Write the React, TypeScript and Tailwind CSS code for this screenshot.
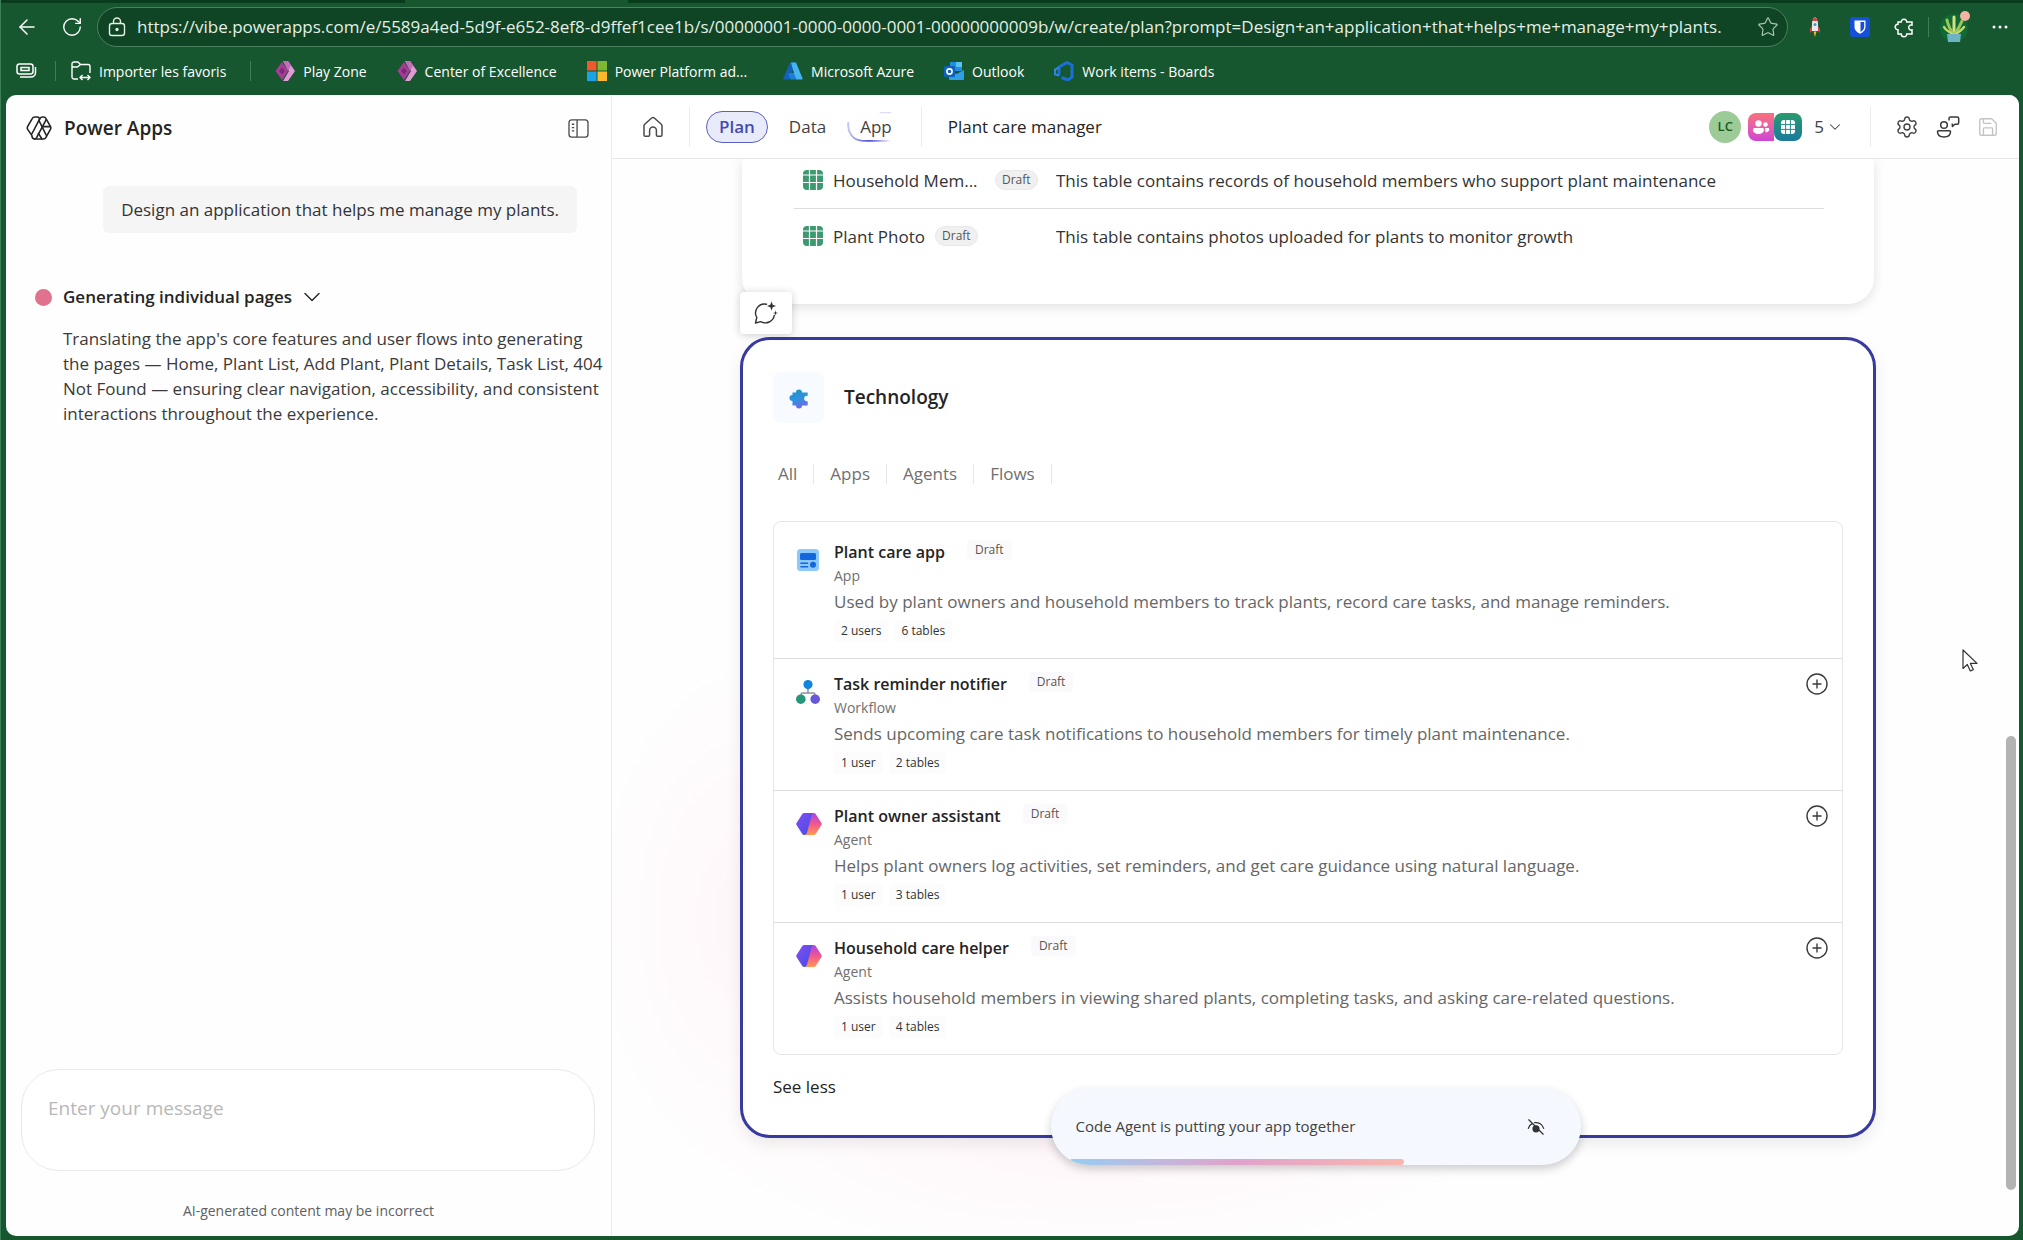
import { ReactNode } from "react";
import { ArrowLeft, ChevronDown, CirclePlus, RotateCw, Save, Settings, Star } from "lucide-react";

type Item = {
  title: string;
  kind: "App" | "Workflow" | "Agent";
  description: string;
  users: string;
  tables: string;
};

const TABLES = [
  { name: "Household Mem...", description: "This table contains records of household members who support plant maintenance", cut: true },
  { name: "Plant Photo", description: "This table contains photos uploaded for plants to monitor growth", cut: false },
];

const ITEMS: Item[] = [
  {
    title: "Plant care app",
    kind: "App",
    description: "Used by plant owners and household members to track plants, record care tasks, and manage reminders.",
    users: "2 users",
    tables: "6 tables",
  },
  {
    title: "Task reminder notifier",
    kind: "Workflow",
    description: "Sends upcoming care task notifications to household members for timely plant maintenance.",
    users: "1 user",
    tables: "2 tables",
  },
  {
    title: "Plant owner assistant",
    kind: "Agent",
    description: "Helps plant owners log activities, set reminders, and get care guidance using natural language.",
    users: "1 user",
    tables: "3 tables",
  },
  {
    title: "Household care helper",
    kind: "Agent",
    description: "Assists household members in viewing shared plants, completing tasks, and asking care-related questions.",
    users: "1 user",
    tables: "4 tables",
  },
];

const PUZZLE =
  "M6 7h3.2a2.8 2.8 0 1 1 5.6 0H20v3a2.6 2.6 0 1 0 0 5v4h-5.2a2.8 2.8 0 1 1-5.6 0H6v-4.2a2.8 2.8 0 1 1 0-5.6z";

function PowerAppsLogo() {
  return (
    <svg className="w-[26px] h-6" viewBox="0 0 26 24" fill="none" stroke="#242424" strokeWidth="1.6" strokeLinejoin="round" strokeLinecap="round" aria-hidden="true">
      <path d="M5.8 19.4 1.7 13.4a3 3 0 0 1 0-3L6.2 2.6A3 3 0 0 1 8.8 1h2.6a2 2 0 0 1 1.8 2.9L5.8 18" />
      <path d="M13 4.6 14 2.4A3 3 0 0 1 16.6 1h.8a3 3 0 0 1 2.6 1.6l4.4 7.8a3 3 0 0 1 0 3L20 21.4A3 3 0 0 1 17.4 23H9a3 3 0 0 1-3-2.6" />
      <path d="M20.2 3.6 10.6 21.6A3 3 0 0 1 8.4 23" />
      <path d="m13.2 5 7 14.2M12.4 17.4l3.4 5.4M16 10.6h8" />
    </svg>
  );
}

function PaneIcon() {
  return (
    <svg className="w-[21px] h-[19px]" viewBox="0 0 22 20" fill="none" stroke="#4a4a4a" strokeWidth="1.4" aria-hidden="true">
      <rect x="1" y="1" width="20" height="18" rx="3" />
      <path d="M9.5 1v18M4 5.5h2.5M4 9h2.5M4 12.5h2.5" />
    </svg>
  );
}

function HomeIcon() {
  return (
    <svg className="size-6" viewBox="0 0 24 24" fill="none" stroke="#4a4a4a" strokeWidth="1.5" strokeLinejoin="round" aria-hidden="true">
      <path d="M3 10.800c0-.6.2-1.100.7-1.500l7-6.300a2 2 0 0 1 2.600 0l7 6.300c.5.4.7.9.7 1.500V20a1.300 1.300 0 0 1-1.300 1.300h-3A1.300 1.300 0 0 1 15.400 20v-4.600a3.400 3.400 0 0 0-6.800 0V20a1.300 1.300 0 0 1-1.300 1.300h-3A1.300 1.300 0 0 1 3 20z" />
    </svg>
  );
}

function FeedbackIcon() {
  return (
    <svg className="size-6" viewBox="0 0 24 24" fill="none" stroke="#3a3a3a" strokeWidth="1.5" strokeLinejoin="round" aria-hidden="true">
      <circle cx="8" cy="10" r="3.3" />
      <path d="M2.500 15.800h11a1 1 0 0 1 1 1c0 3.400-2.800 5.200-6.500 5.200s-6.500-1.800-6.500-5.200a1 1 0 0 1 1-1z" />
      <path d="M13 5.500v-2A1.500 1.500 0 0 1 14.500 2h6.700A1.500 1.500 0 0 1 22.700 3.500v4.200a1.500 1.500 0 0 1-1.500 1.500H19l-2.600 2.200V9.200h-.9" />
    </svg>
  );
}

function TableIcon() {
  return (
    <svg className="size-5 shrink-0" viewBox="0 0 20 20" aria-hidden="true">
      <rect width="20" height="20" rx="4" fill="#3d9970" />
      <path d="M6.5 0v20M13.5 0v20M0 5h20M0 12.5h20" stroke="#fff" strokeWidth="1.2" />
    </svg>
  );
}

function ItemIcon({ kind, id }: { kind: Item["kind"]; id: string }) {
  if (kind === "App") {
    return (
      <svg className="size-6" viewBox="0 0 24 24" aria-hidden="true">
        <rect x="1" y="1" width="22" height="22" rx="3.5" fill="#8cc8fa" />
        <rect x="4" y="5" width="16" height="7" rx="1.5" fill="#1267dd" />
        <path d="M5 15.2h6.5M5 18.8h6.5" stroke="#1267dd" strokeWidth="1.6" strokeLinecap="round" />
        <circle cx="17" cy="16.8" r="3" fill="#1267dd" />
      </svg>
    );
  }
  if (kind === "Workflow") {
    return (
      <svg className="size-6" viewBox="0 0 24 24" aria-hidden="true">
        <path d="M12 7v6M5 18v-3.5A1.5 1.5 0 0 1 6.5 13h11a1.5 1.5 0 0 1 1.5 1.5V18" fill="none" stroke="#8a9299" strokeWidth="1.5" />
        <circle cx="12" cy="4.6" r="4.6" fill="#1184dc" />
        <circle cx="4.8" cy="19.2" r="4.8" fill="#27977c" />
        <circle cx="19.2" cy="19.2" r="4.8" fill="#6658d8" />
      </svg>
    );
  }
  return (
    <svg className="w-[26px] h-6" viewBox="0 0 24 24" preserveAspectRatio="none" aria-hidden="true">
      <defs>
        <linearGradient id={`${id}-l`} x1="0" y1="0" x2="1" y2="1">
          <stop offset="0" stopColor="#8a4bf0" />
          <stop offset="1" stopColor="#3c50e8" />
        </linearGradient>
        <linearGradient id={`${id}-r`} x1="0" y1="0" x2="0" y2="1">
          <stop offset="0.1" stopColor="#b44ad8" />
          <stop offset="0.5" stopColor="#f3568c" />
          <stop offset="1" stopColor="#ff9a52" />
        </linearGradient>
      </defs>
      <path d="M7.500 1h9a2 2 0 0 1 1.700 1l5.300 9a2 2 0 0 1 0 2l-5.300 9a2 2 0 0 1-1.700 1H8z" fill={`url(#${id}-r)`} />
      <path d="M15 1H7.500a2 2 0 0 0-1.700 1L.5 11a2 2 0 0 0 0 2l5.300 9a2 2 0 0 0 1.700 1c1.500 0 2.300-1 2.700-2.500z" fill={`url(#${id}-l)`} />
    </svg>
  );
}

function DiamondIcon() {
  return (
    <svg className="size-5 shrink-0" viewBox="0 0 20 20" aria-hidden="true">
      <path d="M8 0h5l7 10-7 10H8l6-10z" fill="#e29ad6" />
      <path d="M7 1l6 9-6 9-6.500-9z" fill="#a43c98" />
      <path d="M8 0h5l3 4.500L13 10z" fill="#c96bbd" />
      <path d="M7 6.500 10 10l-3 3.500L4 10z" fill="#7c2a78" />
    </svg>
  );
}

function Bookmark({ icon, label }: { icon: ReactNode; label: string }) {
  return (
    <a href="#" className="flex items-center gap-2 text-white">
      {icon}
      {label}
    </a>
  );
}

function BrowserBar() {
  return (
    <header className="text-white">
      <div className="flex h-[3px]">
        <div className="w-1/5 bg-[#093b1d]" />
        <div className="w-[11%]" />
        <div className="flex-1 bg-[#093b1d]" />
      </div>
      <div className="flex items-center h-10 mt-1 pl-[14px] pr-3">
        <button aria-label="Back"><ArrowLeft className="size-6" strokeWidth={1.5} /></button>
        <button aria-label="Refresh" className="ml-[22px]"><RotateCw className="size-[22px]" strokeWidth={1.5} /></button>
        <div className="ml-[14px] flex-1 min-w-0 h-10 flex items-center rounded-full border border-[#4c8160] bg-[#0f4425] pl-[9px] pr-2">
          <svg className="size-5 shrink-0" viewBox="0 0 20 20" fill="none" stroke="#e4efe6" strokeWidth="1.4" aria-hidden="true">
            <rect x="2.5" y="6.5" width="15" height="12" rx="2.5" />
            <path d="M6.500 6.500V4.500a3.500 3.500 0 0 1 7 0v2" />
            <circle cx="10" cy="12.500" r="1" fill="#e4efe6" />
          </svg>
          <input
            aria-label="Address"
            readOnly
            className="ml-[10px] flex-1 min-w-0 bg-transparent text-[17px] text-[#e4efe6] outline-none"
            value="https://vibe.powerapps.com/e/5589a4ed-5d9f-e652-8ef8-d9ffef1cee1b/s/00000001-0000-0000-0001-00000000009b/w/create/plan?prompt=Design+an+application+that+helps+me+manage+my+plants."
          />
          <button aria-label="Add to favorites" className="ml-2 text-[#a9c6b1]"><Star className="size-[22px]" strokeWidth={1.3} /></button>
        </div>
        <button aria-label="Rocket" className="ml-[22px]">
          <svg className="w-2.5 h-5" viewBox="0 0 10 20">
            <path d="M5 0c2 1.500 3 4 3 7v7H2V7c0-3 1-5.500 3-7z" fill="#e8e8ea" />
            <path d="M5 0c1.200 1 2.200 2.300 2.600 4H2.400C2.800 2.300 3.800 1 5 0zM2 9 0 12v4l2-2zM8 9l2 3v4l-2-2z" fill="#d8404a" />
            <circle cx="5" cy="7.500" r="1.500" fill="#4a90c8" />
            <path d="M3.500 14.500h3L5 20z" fill="#f7b52c" />
          </svg>
        </button>
        <button aria-label="Bitwarden" className="ml-[30px]">
          <svg className="size-5" viewBox="0 0 20 20">
            <rect width="20" height="20" rx="3" fill="#1450d8" />
            <path d="M4.500 3.500h11V10c0 3.500-3 5.500-5.500 6.800C7.500 15.500 4.500 13.500 4.500 10z" fill="#fff" />
            <path d="M10.500 5h3.700v5c0 2.300-1.900 3.900-3.700 4.900z" fill="#1450d8" />
          </svg>
        </button>
        <button aria-label="Extensions" className="ml-[22px]">
          <svg className="size-6" viewBox="0 0 24 24" fill="none" stroke="#fff" strokeWidth="1.5"><path d={PUZZLE} /></svg>
        </button>
        <span className="ml-3 w-px h-5 bg-[#3f7f57]" />
        <button aria-label="Profile" className="ml-[10px]">
          <svg className="size-8" viewBox="0 0 32 32">
            <circle cx="15" cy="17" r="14" fill="#0f6a35" />
            <g fill="none" strokeLinecap="round">
              <path d="M15 24V6" stroke="#d6e07c" strokeWidth="3" />
              <path d="M15 24C12 20 9 14 8 9M15 24c3-4 6-9 8-14" stroke="#9cc65a" strokeWidth="3" />
              <path d="M15 24C10 21 6 18 5 16M15 24c5-3 8-5 10-8" stroke="#c4d76c" strokeWidth="2.5" />
            </g>
            <path d="M8 23h14l-1 8H9z" fill="#6db3c4" />
            <circle cx="26" cy="5" r="5" fill="#f5b3a4" />
          </svg>
        </button>
        <button aria-label="More" className="ml-5">
          <svg className="w-5 h-1" viewBox="0 0 20 4" fill="#fff"><circle cx="3" cy="2" r="1.5" /><circle cx="9" cy="2" r="1.5" /><circle cx="15" cy="2" r="1.5" /></svg>
        </button>
      </div>
      <nav className="flex items-center h-12 px-[15px] text-[14px]" aria-label="Favorites">
        <button aria-label="Collections">
          <svg className="w-[21px] h-4" viewBox="0 0 21 16" fill="none" stroke="#fff" strokeWidth="1.5">
            <rect x="1" y="1" width="16" height="10" rx="2.5" />
            <path d="M5 4.500h8v3H5zM19.500 4v5.500a4.500 4.500 0 0 1-4.500 4.500H4" />
          </svg>
        </button>
        <span className="ml-[18px] mr-[15px] w-px h-5 bg-[#3f7f57]" />
        <Bookmark
          label="Importer les favoris"
          icon={
            <svg className="size-5" viewBox="0 0 20 20" fill="none" stroke="#fff" strokeWidth="1.4" strokeLinejoin="round">
              <path d="M7 18H3a2 2 0 0 1-2-2V3a2 2 0 0 1 2-2h4l2.500 2.500H17a2 2 0 0 1 2 2V12M1 6h5.500l3-2.500M9 16.500h10M11.500 14 9 16.500l2.500 2.500M16.500 14l2.500 2.500-2.500 2.500" />
            </svg>
          }
        />
        <span className="ml-6 mr-6 w-px h-5 bg-[#3f7f57]" />
        <div className="flex items-center gap-[30px]">
          <Bookmark label="Play Zone" icon={<DiamondIcon />} />
          <Bookmark label="Center of Excellence" icon={<DiamondIcon />} />
          <Bookmark
            label="Power Platform ad..."
            icon={
              <svg className="size-5" viewBox="0 0 20 20">
                <path d="M0 0h9.500v9.500H0z" fill="#f1582b" />
                <path d="M10.500 0H20v9.500h-9.500z" fill="#7cb832" />
                <path d="M0 10.500h9.500V20H0z" fill="#1ba3e8" />
                <path d="M10.500 10.500H20V20h-9.500z" fill="#fbb928" />
              </svg>
            }
          />
          <div className="ml-1.5">
            <Bookmark
              label="Microsoft Azure"
              icon={
                <svg className="size-5" viewBox="0 0 20 20">
                  <path d="M7 1.500h5L6.500 18.500H1.500c-1 0-1.500-.8-1.200-1.600z" fill="#1260b8" />
                  <path d="M8 1.500h5l6.500 15.700c.3.700-.2 1.300-1 1.300h-5L7 12.500h4z" fill="#45b4f0" />
                  <path d="M5 12.500h6l2.500 6H7.500z" fill="#1b7fd6" />
                </svg>
              }
            />
          </div>
          <Bookmark
            label="Outlook"
            icon={
              <svg className="size-5" viewBox="0 0 20 20">
                <path d="M6 1h12v9H6z" fill="#1f8fe0" />
                <path d="M12 1h6v5h-6z" fill="#59c2f5" />
                <path d="M5 9l7.500 4L20 9v9a1 1 0 0 1-1 1H6a1 1 0 0 1-1-1z" fill="#2f9fe8" />
                <rect y="5" width="11" height="11" rx="1" fill="#0f62b8" />
                <circle cx="5.5" cy="10.5" r="2.6" fill="none" stroke="#fff" strokeWidth="1.6" />
              </svg>
            }
          />
          <Bookmark
            label="Work items - Boards"
            icon={
              <svg className="size-5" viewBox="0 0 20 20" fill="none">
                <path d="M5 14.500V6l8-4.500L18 4v12l-4 3-6.500-2.500" stroke="#1b6fd8" strokeWidth="3" strokeLinejoin="round" />
                <path d="M5 6.500 1 8.500v5l4 1" stroke="#2f86e6" strokeWidth="2" />
              </svg>
            }
          />
        </div>
      </nav>
    </header>
  );
}

function Sidebar() {
  return (
    <aside className="w-[606px] shrink-0 flex flex-col border-r border-[#ececec]">
      <div className="h-[66px] flex items-center gap-3 pl-5 pr-[22px]">
        <PowerAppsLogo />
        <h1 className="flex-1 text-[19px] font-semibold text-[#242424]">Power Apps</h1>
        <button aria-label="Collapse pane"><PaneIcon /></button>
      </div>
      <p className="self-end mt-[25px] mr-[34px] px-[18px] py-[11px] rounded-md bg-[#f5f5f5] text-[17px] leading-[25px] text-[#333]">
        Design an application that helps me manage my plants.
      </p>
      <button className="mt-[51px] ml-[29px] h-[26px] self-start flex items-center text-[17px] font-semibold text-[#242424]">
        <span className="size-[17px] rounded-full bg-[#e0718f] mr-[11px]" />
        Generating individual pages
        <ChevronDown className="ml-1.5 size-7" strokeWidth={1.2} aria-hidden="true" />
      </button>
      <p className="mt-4 pl-[57px] pr-1 text-[17px] leading-[25px] text-[#3a3a3a]">
        Translating the app's core features and user flows into generating the pages — Home, Plant List, Add Plant, Plant Details, Task List, 404 Not Found — ensuring clear navigation, accessibility, and consistent interactions throughout the experience.
      </p>
      <div className="mt-auto ml-[15px] mr-4">
        <textarea
          aria-label="Message"
          placeholder="Enter your message"
          className="block w-full h-[102px] resize-none rounded-[38px] border border-[#e8e8e8] bg-white px-[26px] py-[25px] text-[19px] leading-[26px] placeholder:text-[#b8b8b8] outline-none"
        />
      </div>
      <p className="mt-[30px] mb-[15px] text-center text-[14px] leading-5 text-[#606060]">AI-generated content may be incorrect</p>
    </aside>
  );
}

function Toolbar() {
  return (
    <div className="h-16 shrink-0 flex items-center border-b border-[#e6e6e6] bg-white pl-[29px] pr-5 text-[17px] text-[#424242]">
      <button aria-label="Home"><HomeIcon /></button>
      <span className="ml-6 mr-4 w-px h-10 bg-[#ececec]" />
      <nav className="flex items-center gap-2">
        <button className="h-8 px-3 rounded-full border border-[#5b5fc7] bg-[#e8ebfa] font-semibold text-[#444bb0]">Plan</button>
        <button className="h-8 px-[13px]">Data</button>
        <button className="relative h-8 px-[13px]">
          App
          <svg className="absolute inset-0 size-full" viewBox="0 0 60 32" fill="none" aria-hidden="true">
            <defs>
              <linearGradient id="app-arc" x1="0" x2="1">
                <stop offset="0" stopColor="#c3c6ee" />
                <stop offset="0.5" stopColor="#4f52d0" />
                <stop offset="1" stopColor="#4f52d0" stopOpacity="0" />
              </linearGradient>
            </defs>
            <path d="M1.500 11C0 20 5 30.500 17 30.500H46" stroke="url(#app-arc)" strokeWidth="2" />
            <path d="M34 1H46" stroke="#dcdef5" strokeWidth="1.5" />
          </svg>
        </button>
      </nav>
      <span className="ml-4 mr-[26px] w-px h-10 bg-[#ececec]" />
      <h2 className="flex-1 text-[#242424]">Plant care manager</h2>
      <span className="size-8 rounded-full bg-[#9ccb98] text-[13px] font-semibold text-[#1d5a1d] flex items-center justify-center">LC</span>
      <span className="ml-[7px] w-[26px] h-7 rounded-l-lg bg-linear-to-b from-[#fb6f78] to-[#cf43d6] flex items-center justify-center">
        <svg className="w-5 h-4" viewBox="0 0 20 16" fill="#fff" aria-hidden="true">
          <circle cx="7.5" cy="4.5" r="3.2" /><circle cx="14.5" cy="5.5" r="2.3" />
          <path d="M2 10.500A1.500 1.500 0 0 1 3.500 9h8a1.500 1.500 0 0 1 1.500 1.500c0 2.800-2.500 4.500-5.500 4.500S2 13.300 2 10.500zM14 9h3a1.300 1.300 0 0 1 1.300 1.300c0 1.800-1.600 3-3.800 2.900z" />
        </svg>
      </span>
      <span className="w-7 h-7 rounded-lg bg-linear-to-b from-[#2c9a6c] to-[#1c7a9c] flex items-center justify-center">
        <svg className="size-[14px]" viewBox="0 0 14 14" aria-hidden="true">
          <rect width="14" height="14" rx="3" fill="#fff" />
          <path d="M4.600 0v14M9.400 0v14M0 4.600h14M0 9.400h14" stroke="#248a84" strokeWidth="1" />
        </svg>
      </span>
      <button className="ml-3 flex items-center gap-0.5">
        5
        <ChevronDown className="size-[18px]" strokeWidth={1.4} aria-hidden="true" />
      </button>
      <span className="ml-[26px] mr-6 w-px h-10 bg-[#ececec]" />
      <div className="flex items-center gap-[17px]">
        <button aria-label="Settings"><Settings className="size-6" strokeWidth={1.4} /></button>
        <button aria-label="Feedback"><FeedbackIcon /></button>
        <button aria-label="Save" disabled className="text-[#c4c4c4]"><Save className="size-[22px]" strokeWidth={1.5} /></button>
      </div>
    </div>
  );
}

function TablesCard() {
  return (
    <section className="mx-0.5 pl-[52px] pr-[50px] pb-10 rounded-b-[26px] bg-white shadow-[0_3px_12px_rgba(0,0,0,0.12)]">
      <table className="w-full table-fixed text-left text-[17px] text-[#333]">
        <tbody>
          {TABLES.map((t) => (
            <tr key={t.name} className="h-14 border-b border-[#dedede] first:h-[49px] first:*:pb-1.5 last:border-0">
              <td className="w-[262px] pl-[9px]">
                <div className="flex items-center">
                  <TableIcon />
                  <span className={t.cut ? "ml-2.5 w-[152px] truncate" : "ml-2.5"}>{t.name}</span>
                  <span className="ml-2.5 h-5 px-[6px] rounded-full border border-[#e8e8e8] bg-[#f0f0f0] text-[12px] leading-[18px] text-[#555]">Draft</span>
                </div>
              </td>
              <td className="truncate">{t.description}</td>
            </tr>
          ))}
        </tbody>
      </table>
    </section>
  );
}

function TechnologyCard() {
  return (
    <section className="relative mt-[33px] rounded-[30px] border-[3px] border-[#373a9e] bg-white px-[30px] pt-8 pb-9 shadow-[0_6px_16px_rgba(0,0,0,0.08)]">
      <button aria-label="Comment with Copilot" className="absolute -top-12 -left-[3px] w-[52px] h-[42px] flex items-center justify-center bg-white rounded shadow-[0_1px_8px_rgba(0,0,0,0.2)]">
        <svg className="size-6" viewBox="0 0 24 24" fill="none" stroke="#333" strokeWidth="1.4" strokeLinecap="round" strokeLinejoin="round">
          <path d="M12.500 3.200A9 9 0 0 0 2.800 16.500L1.500 22l5.400-1.400a9 9 0 0 0 13.400-6.200" />
          <path d="m17.500.5 1.200 3.300L22 5l-3.300 1.200-1.200 3.300-1.200-3.300L13 5l3.300-1.200zM21.500 9.500l.6 1.900 1.900.6-1.900.6-.6 1.900-.6-1.900-1.900-.6 1.900-.6z" fill="#333" stroke="none" />
        </svg>
      </button>
      <div className="flex items-center gap-5">
        <span className="size-[51px] rounded-lg bg-[#f7fafe] flex items-center justify-center">
          <svg className="size-[26px]" viewBox="0 0 24 24" aria-hidden="true">
            <defs>
              <linearGradient id="tech" x1="0.2" y1="0" x2="0.6" y2="1">
                <stop offset="0" stopColor="#2290c0" />
                <stop offset="0.5" stopColor="#2d92e0" />
                <stop offset="1" stopColor="#7467e4" />
              </linearGradient>
            </defs>
            <path d={PUZZLE} fill="url(#tech)" />
          </svg>
        </span>
        <h3 className="text-[19px] font-semibold text-[#242424]">Technology</h3>
      </div>
      <div className="mt-[38px] flex h-[26px] items-center divide-x divide-[#e6e6e6] text-[17px] leading-5 text-[#707070]">
        <button className="pl-[5px] pr-4">All</button>
        <button className="px-4">Apps</button>
        <button className="px-4">Agents</button>
        <button className="px-4">Flows</button>
        <span className="h-5" />
      </div>
      <ul className="mt-[34px] pt-[5px] rounded-lg border border-[#e6e6e6]">
        {ITEMS.map((item, i) => (
          <li key={item.title} className="flex pl-[22px] pr-[13px] pt-[13px] pb-4 border-b border-[#dedede] last:border-0">
            <span className="mt-2 w-[26px]"><ItemIcon kind={item.kind} id={`item-${i}`} /></span>
            <div className="ml-3 flex-1">
              <div className="flex items-start">
                <h4 className="text-base leading-6 font-semibold text-[#242424]">{item.title}</h4>
                <span className="ml-[22px] px-2 rounded bg-[#fafafc] text-[12px] leading-5 text-[#555]">Draft</span>
              </div>
              <p className="mt-0.5 text-[14px] leading-5 text-[#707070]">{item.kind}</p>
              <p className="mt-[3px] text-[17px] leading-[26px] text-[#666]">{item.description}</p>
              <div className="mt-[5px] flex gap-1.5 text-[12px] leading-[22px] font-medium text-[#333]">
                <span className="px-[7px] rounded bg-[#fcfcfd]">{item.users}</span>
                <span className="px-[7px] rounded bg-[#fcfcfd]">{item.tables}</span>
              </div>
            </div>
            {item.kind !== "App" && (
              <button aria-label={`Add ${item.title}`} className="self-start">
                <CirclePlus className="size-6 text-[#3a3a3a]" strokeWidth={1.4} />
              </button>
            )}
          </li>
        ))}
      </ul>
      <button className="block mt-5 text-[17px] leading-6 font-medium text-[#242424]">See less</button>
    </section>
  );
}

function Toast() {
  return (
    <div role="status" className="absolute bottom-[71px] left-1/2 -translate-x-1/2 w-[530px] h-[77px] rounded-[38px] overflow-hidden bg-[#f5f8fe] shadow-[0_4px_10px_rgba(0,0,0,0.2)] flex items-center justify-between pl-[25px] pr-9">
      <span className="text-[15px] text-[#424242]">Code Agent is putting your app together</span>
      <button aria-label="Hide preview">
        <svg className="size-[18px]" viewBox="0 0 20 20" fill="none" stroke="#333" strokeWidth="1.4" strokeLinecap="round" aria-hidden="true">
          <path d="M2 2l16 16M1.500 11.500C2.300 8.700 4 6.900 6.200 5.900M8.500 5.100c4.500-.6 8.700 2 10 6.400" />
          <circle cx="10" cy="12" r="3.3" fill="#333" />
        </svg>
      </button>
      <span className="absolute bottom-0 left-5 h-1.5 w-[63%] rounded-r bg-linear-to-r from-[#93ccf2] via-[#e0a2cb] to-[#f9b6ad]" />
    </div>
  );
}

export default function App() {
  return (
    <div className="h-screen flex flex-col overflow-hidden bg-[#17572f] border-l border-[#3d7f57] font-['Open_Sans','Segoe_UI',sans-serif]">
      <BrowserBar />
      <div className="flex-1 min-h-0 flex ml-[5px] mr-1 mb-1 rounded-[10px] overflow-hidden bg-[#fefefe]">
        <Sidebar />
        <main className="flex-1 min-w-0 flex flex-col">
          <Toolbar />
          <div className="relative flex-1 min-h-0 flex overflow-hidden bg-[radial-gradient(ellipse_150px_260px_at_130px_760px,#fef6f9,transparent),radial-gradient(ellipse_400px_130px_at_480px_970px,#fef5f8,transparent)]">
            <div className="flex-1 min-w-0 px-32">
              <TablesCard />
              <TechnologyCard />
            </div>
            <div className="w-[15px] flex flex-col justify-end pb-[46px]">
              <div className="h-[44%] w-2.5 ml-0.5 rounded-full bg-[#b3b3b3]" />
            </div>
            <Toast />
            <svg className="absolute right-[41px] top-[490px] w-4 h-6" viewBox="0 0 16 24" fill="#fff" stroke="#333" strokeWidth="1.2" strokeLinejoin="round" aria-hidden="true">
              <path d="M1 1v18.500l4.300-4 3 6.500 3-1.400-2.900-6.200H15z" />
            </svg>
          </div>
        </main>
      </div>
    </div>
  );
}
